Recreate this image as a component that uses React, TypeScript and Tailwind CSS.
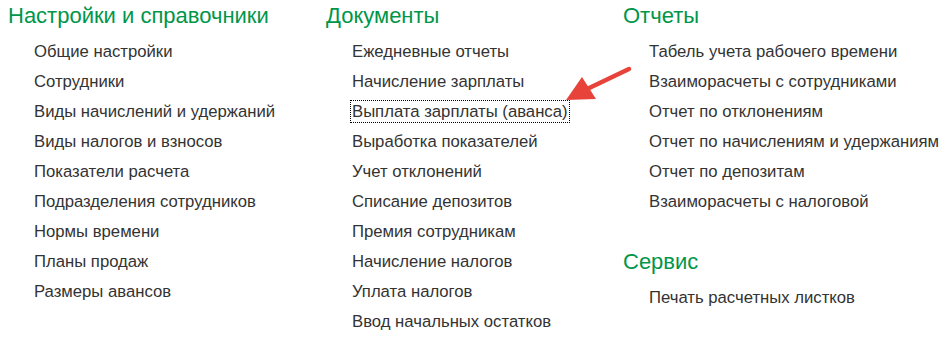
import React from 'react';

interface Section {
    title: string;
    items: string[];
}

const settings: Section = {
    title: 'Настройки и справочники',
    items: [
        'Общие настройки',
        'Сотрудники',
        'Виды начислений и удержаний',
        'Виды налогов и взносов',
        'Показатели расчета',
        'Подразделения сотрудников',
        'Нормы времени',
        'Планы продаж',
        'Размеры авансов',
    ],
};

const documents: Section = {
    title: 'Документы',
    items: [
        'Ежедневные отчеты',
        'Начисление зарплаты',
        'Выплата зарплаты (аванса)',
        'Выработка показателей',
        'Учет отклонений',
        'Списание депозитов',
        'Премия сотрудникам',
        'Начисление налогов',
        'Уплата налогов',
        'Ввод начальных остатков',
    ],
};

const reports: Section = {
    title: 'Отчеты',
    items: [
        'Табель учета рабочего времени',
        'Взаиморасчеты с сотрудниками',
        'Отчет по отклонениям',
        'Отчет по начислениям и удержаниям',
        'Отчет по депозитам',
        'Взаиморасчеты с налоговой',
    ],
};

const service: Section = {
    title: 'Сервис',
    items: ['Печать расчетных листков'],
};

const SectionBlock: React.FC<{ section: Section; focused?: string }> = ({ section, focused }) => (
    <div>
        <h3 className="text-[22px] leading-[32px] text-[#00964a] whitespace-nowrap">{section.title}</h3>
        <ul className="mt-[4px] pl-[26px]">
            {section.items.map(item => (
                <li key={item} className="h-[30px] flex items-center whitespace-nowrap">
                    <span
                        className={
                            item === focused
                                ? 'text-[16.7px] text-[#333] -ml-[2px] px-[1px] border border-dotted border-black leading-[21px]'
                                : 'text-[16.7px] text-[#333] leading-[23px]'
                        }
                    >
                        {item}
                    </span>
                </li>
            ))}
        </ul>
    </div>
);

export default function App() {
    return (
        <div className="relative w-[947px] h-[338px] bg-white font-['Liberation_Sans',Arial,sans-serif] overflow-hidden">
            <div className="flex pl-[8px] pt-0">
                <div className="w-[318px] shrink-0">
                    <SectionBlock section={settings} />
                </div>
                <div className="w-[297px] shrink-0">
                    <SectionBlock section={documents} focused="Выплата зарплаты (аванса)" />
                </div>
                <div className="flex flex-col gap-[30px] shrink-0">
                    <SectionBlock section={reports} />
                    <SectionBlock section={service} />
                </div>
            </div>
            <svg className="absolute left-0 top-0 pointer-events-none" width="947" height="338">
                <line x1="629" y1="69" x2="585" y2="90" stroke="#e8433a" strokeWidth="4.5" strokeLinecap="round" />
                <polygon points="566,100 582,77 596,99" fill="#e8433a" />
            </svg>
        </div>
    );
}
